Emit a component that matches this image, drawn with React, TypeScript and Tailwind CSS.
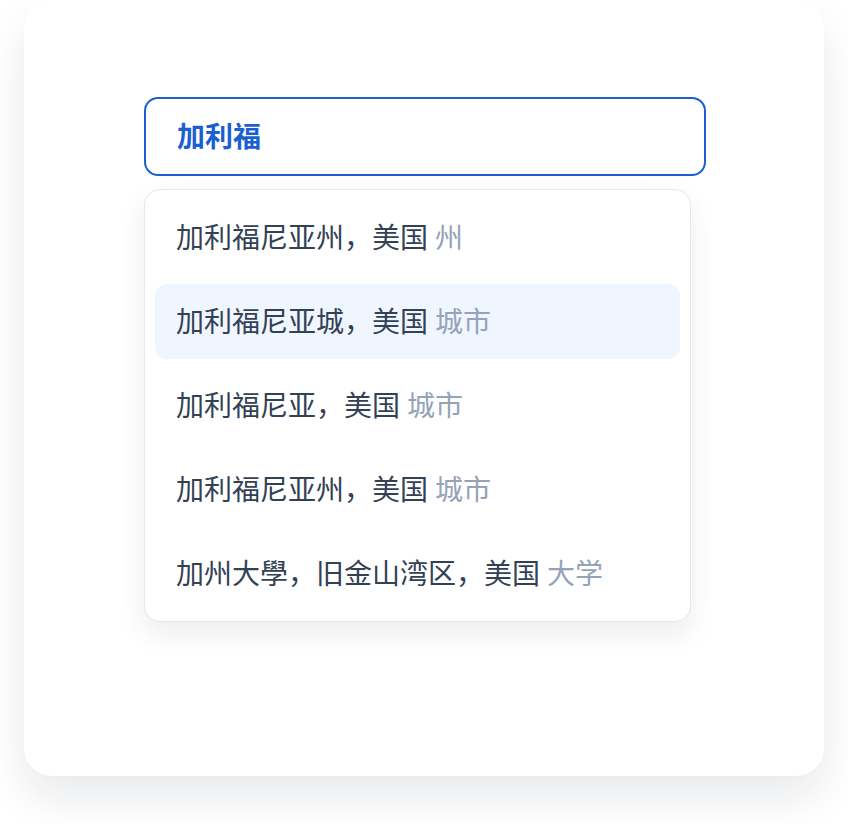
import { useState } from "react";

type Suggestion = { label: string; kind: string };

const SUGGESTIONS: Suggestion[] = [
  { label: "加利福尼亚州，美国", kind: "州" },
  { label: "加利福尼亚城，美国", kind: "城市" },
  { label: "加利福尼亚，美国", kind: "城市" },
  { label: "加利福尼亚州，美国", kind: "城市" },
  { label: "加州大學，旧金山湾区，美国", kind: "大学" },
];

const FONT = "font-['Noto_Sans_CJK_SC','Noto_Sans',sans-serif]";

export default function App() {
  const [query] = useState("加利福");
  const [active] = useState(1);

  return (
    <div className={`min-h-[824px] bg-white px-6 ${FONT}`}>
      <div className="h-[776px] rounded-[28px] bg-white pt-[97px] shadow-[0_22px_44px_rgba(15,23,42,0.09)]">
        <div className="ml-[120px] w-[562px]">
          <div className="flex h-[79px] items-center rounded-[14px] border-2 border-[#1b5fd3] px-[31px] pb-[3px]">
            <span className="text-[28px] font-bold text-[#1b5fd3]">{query}</span>
          </div>

          <ul className="mt-[13px] flex w-[547px] flex-col gap-[9px] rounded-[16px] border border-[#e5e7eb] bg-white p-[10px] shadow-[0_12px_28px_rgba(15,23,42,0.08)]">
            {SUGGESTIONS.map((s, i) => (
              <li
                key={i}
                className={`flex h-[75px] items-center rounded-[12px] px-[21px] pb-[3px] text-[28px] ${
                  i === active ? "bg-[#eff6ff]" : ""
                }`}
              >
                <span className="text-[#334155]">{s.label}</span>
                <span className="ml-[7px] text-[#94a3b8]">{s.kind}</span>
              </li>
            ))}
          </ul>
        </div>
      </div>
    </div>
  );
}
